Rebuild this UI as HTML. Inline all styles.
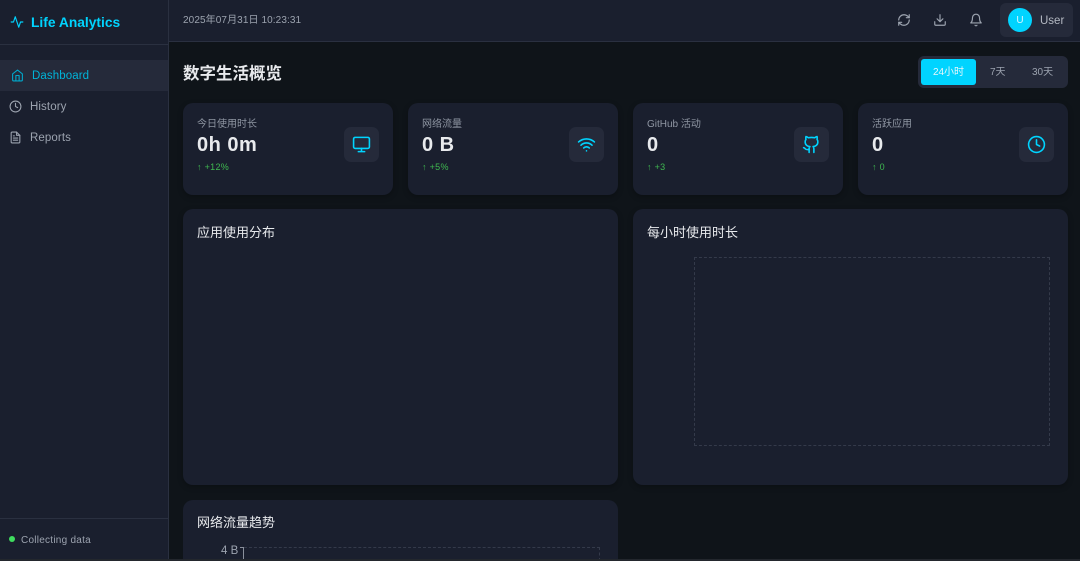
<!DOCTYPE html>
<html><head><meta charset="utf-8"><style>
*{box-sizing:border-box;margin:0;padding:0}
html,body{width:1080px;height:561px;overflow:hidden;background:#0f1419;font-family:"Liberation Sans","Noto Sans CJK SC",sans-serif;color:#e8eaed}
#root{position:relative;width:1080px;height:561px;overflow:hidden;background:#0f1419}
.a{position:absolute;white-space:nowrap}
svg{position:absolute;fill:none;stroke-linecap:round;stroke-linejoin:round;stroke-width:2}
.card{position:absolute;background:#1a1f2e;border-radius:10px;box-shadow:0 2px 6px rgba(0,0,0,.25)}
.ib{position:absolute;left:161px;top:24px;width:35px;height:35px;border-radius:7px;background:#252a3a}
.ib svg{left:8px;top:8px;stroke:#00d4ff}
.lab{position:absolute;left:14px;top:15px;font-size:10px;line-height:13px;color:#8f96a3;white-space:nowrap}
.val{position:absolute;left:14px;top:28px;font-size:20px;line-height:28px;font-weight:700;color:#e8eaed;white-space:nowrap;letter-spacing:.5px}
.chg{position:absolute;left:14px;top:58px;font-size:9px;line-height:12px;color:#3fb950;white-space:nowrap;letter-spacing:.3px}
.ttl{position:absolute;left:14px;top:15px;font-size:13px;line-height:18px;color:#e8eaed;white-space:nowrap;font-weight:400}
</style></head><body><div id="root">
<div class="a" style="left:0;top:0;width:169px;height:561px;background:#1a1f2e;border-right:1px solid #2a3040"></div>
<div class="a" style="left:0;top:44px;width:168px;height:1px;background:#2a3040"></div>
<svg style="left:10px;top:15px;stroke:#00d4ff" width="14" height="14" viewBox="0 0 24 24"><path d="M22 12h-4l-3 9L9 3l-3 9H2"/></svg>
<div class="a" style="left:31px;top:14px;font-size:13.8px;line-height:18px;font-weight:700;color:#00d4ff">Life Analytics</div>
<div class="a" style="left:0;top:60px;width:168px;height:31px;background:#252a3a"></div>
<svg style="left:11px;top:69px;stroke:#00a9cc" width="13" height="13" viewBox="0 0 24 24"><path d="m3 9 9-7 9 7v11a2 2 0 0 1-2 2H5a2 2 0 0 1-2-2z"/><path d="M9 22V12h6v10"/></svg>
<div class="a" style="left:32px;top:69px;font-size:11.5px;line-height:15px;color:#00b4d8;letter-spacing:.1px">Dashboard</div>
<svg style="left:9px;top:100px;stroke:#9ca3af" width="13" height="13" viewBox="0 0 24 24"><circle cx="12" cy="12" r="10"/><path d="M12 6v6l4 2"/></svg>
<div class="a" style="left:30px;top:100px;font-size:11.5px;line-height:15px;color:#9ca3af;letter-spacing:.1px">History</div>
<svg style="left:9px;top:131px;stroke:#9ca3af" width="13" height="13" viewBox="0 0 24 24"><path d="M14 2H6a2 2 0 0 0-2 2v16a2 2 0 0 0 2 2h12a2 2 0 0 0 2-2V8z"/><path d="M14 2v6h6M16 13H8M16 17H8M10 9H8"/></svg>
<div class="a" style="left:30px;top:131px;font-size:11.5px;line-height:15px;color:#9ca3af;letter-spacing:.1px">Reports</div>
<div class="a" style="left:0;top:518px;width:168px;height:1px;background:#2a3040"></div>
<div class="a" style="left:9px;top:536px;width:6px;height:6px;border-radius:50%;background:#3fdc5f"></div>
<div class="a" style="left:21px;top:534px;font-size:10px;line-height:13px;color:#9ca3af;letter-spacing:.25px">Collecting data</div>

<div class="a" style="left:169px;top:0;width:911px;height:42px;background:#1a1f2e;border-bottom:1px solid #2a3040"></div>
<div class="a" style="left:183px;top:14px;font-size:10px;line-height:14px;color:#9ca3af;letter-spacing:.1px">2025年07月31日 10:23:31</div>
<svg style="left:897px;top:13px;stroke:#9ca3af" width="14" height="14" viewBox="0 0 24 24"><path d="M3 12a9 9 0 0 1 9-9 9.750 9.750 0 0 1 6.740 2.740L21 8"/><path d="M21 3v5h-5"/><path d="M21 12a9 9 0 0 1-9 9 9.750 9.750 0 0 1-6.740-2.740L3 16"/><path d="M8 16H3v5"/></svg>
<svg style="left:933px;top:13px;stroke:#9ca3af" width="14" height="14" viewBox="0 0 24 24"><path d="M21 15v4a2 2 0 0 1-2 2H5a2 2 0 0 1-2-2v-4M7 10l5 5 5-5M12 15V3"/></svg>
<svg style="left:969px;top:13px;stroke:#9ca3af" width="14" height="14" viewBox="0 0 24 24"><path d="M18 8A6 6 0 0 0 6 8c0 7-3 9-3 9h18s-3-2-3-9M13.700 21a2 2 0 0 1-3.400 0"/></svg>
<div class="a" style="left:1000px;top:3px;width:73px;height:34px;border-radius:6px;background:#252a3a"></div>
<div class="a" style="left:1008px;top:8px;width:24px;height:24px;border-radius:50%;background:#00d4ff;color:#d8f6ff;font-size:10px;line-height:25px;text-align:center">U</div>
<div class="a" style="left:1040px;top:14px;font-size:11.500px;line-height:14px;color:#b4b9c2">User</div>

<div class="a" style="left:183px;top:63px;font-size:16.500px;line-height:22px;font-weight:700;color:#e8eaed">数字生活概览</div>
<div class="a" style="left:918px;top:56px;width:150px;height:32px;border-radius:6px;background:#252a3a"></div>
<div class="a" style="left:921px;top:59px;width:55px;height:26px;border-radius:3px;background:#00d4ff;color:#e8f6fa;font-size:10px;line-height:28px;text-align:center">24小时</div>
<div class="a" style="left:990px;top:66px;font-size:10px;line-height:14px;color:#9ca3af">7天</div>
<div class="a" style="left:1032px;top:66px;font-size:10px;line-height:14px;color:#9ca3af">30天</div>

<div class="card" style="left:183px;top:103px;width:210px;height:92px">
<div class="lab">今日使用时长</div><div class="val">0h 0m</div><div class="chg">↑ +12%</div>
<div class="ib"><svg width="19" height="19" viewBox="0 0 24 24"><rect x="2" y="3" width="20" height="14" rx="2"/><path d="M8 21h8M12 17v4"/></svg></div></div>
<div class="card" style="left:408px;top:103px;width:210px;height:92px">
<div class="lab">网络流量</div><div class="val">0 B</div><div class="chg">↑ +5%</div>
<div class="ib"><svg width="19" height="19" viewBox="0 0 24 24"><path d="M2 8.800a15 15 0 0 1 20 0M5 12.900a10 10 0 0 1 14 0M8.500 16.400a5 5 0 0 1 7 0M12 20h.01"/></svg></div></div>
<div class="card" style="left:633px;top:103px;width:210px;height:92px">
<div class="lab">GitHub 活动</div><div class="val">0</div><div class="chg">↑ +3</div>
<div class="ib"><svg width="19" height="19" viewBox="0 0 24 24"><path d="M15 22v-4a4.800 4.800 0 0 0-1-3.500c3 0 6-2 6-5.500.1-1.300-.3-2.500-1-3.500.3-1.150.3-2.350 0-3.500 0 0-1 0-3 1.500-2.640-.5-5.360-.5-8 0C6 2 5 2 5 2c-.3 1.150-.3 2.350 0 3.500A5.400 5.400 0 0 0 4 9c0 3.500 3 5.500 6 5.500-.39.490-.68 1.050-.85 1.650-.17.600-.22 1.230-.15 1.850v4"/><path d="M9 18c-4.510 2-5-2-7-2"/></svg></div></div>
<div class="card" style="left:858px;top:103px;width:210px;height:92px">
<div class="lab">活跃应用</div><div class="val">0</div><div class="chg">↑ 0</div>
<div class="ib"><svg width="19" height="19" viewBox="0 0 24 24"><circle cx="12" cy="12" r="10"/><path d="M12 6v6l4 2"/></svg></div></div>

<div class="card" style="left:183px;top:209px;width:435px;height:276px"><div class="ttl">应用使用分布</div></div>
<div class="card" style="left:633px;top:209px;width:435px;height:276px"><div class="ttl">每小时使用时长</div>
<div class="a" style="left:61px;top:48px;width:356px;height:189px;border:1px dashed #343a4a"></div></div>
<div class="card" style="left:183px;top:500px;width:435px;height:61px;border-radius:10px 10px 0 0;box-shadow:none"><div class="ttl" style="top:14px">网络流量趋势</div>
<div class="a" style="left:38px;top:44px;font-size:11.500px;line-height:14px;color:#9ca3af">4 B</div>
<div class="a" style="left:60px;top:47px;width:1px;height:14px;background:#8a909c"></div>
<div class="a" style="left:57px;top:47px;width:3px;height:1px;background:#8a909c"></div>
<div class="a" style="left:61px;top:47px;width:356px;height:14px;border:1px dashed #343a4a;border-left:0;border-bottom:0"></div></div>
<div class="a" style="left:0;top:559px;width:1080px;height:2px;background:#23272d"></div>
</div></body></html>
